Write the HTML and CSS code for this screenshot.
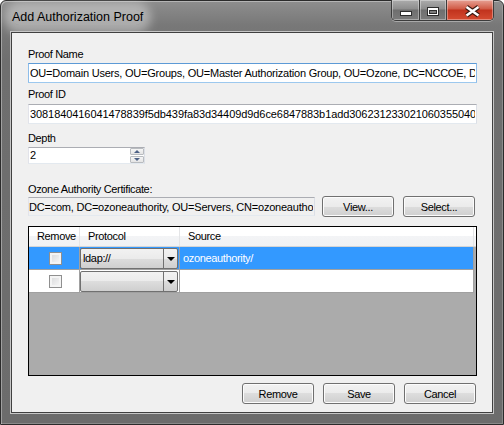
FILE: index.html
```html
<!DOCTYPE html>
<html lang="en">

<head>
    <meta charset="UTF-8">
    <meta name="viewport" content="width=device-width, initial-scale=1.0">
    <title>Add Authorization Proof</title>
    <link rel="stylesheet" href="styles.css">
</head>

<body>
    <div class="window">
        <!-- Title bar with caption buttons -->
        <div class="titlebar">
            <span class="title">Add Authorization Proof</span>
            <div class="caption-buttons">
                <button class="cap cap-min" title="Minimize">
                    <svg width="27" height="21" viewBox="0 0 27 21">
                        <rect x="8.5" y="11.5" width="11" height="4" fill="#fff" stroke="#2d2d2d" />
                    </svg>
                </button>
                <button class="cap cap-max" title="Maximize">
                    <svg width="26" height="21" viewBox="0 0 26 21">
                        <rect x="7.5" y="7.5" width="11" height="8" fill="#fff" stroke="#2d2d2d" />
                        <rect x="9.5" y="10.5" width="7" height="3" fill="#7c7c7c" stroke="#2d2d2d" />
                    </svg>
                </button>
                <button class="cap cap-close" title="Close">
                    <svg width="46" height="21" viewBox="0 0 46 21">
                        <path d="M19.5 7 L31.5 15.5 M31.5 7 L19.5 15.5" stroke="#3b1a12" stroke-width="4.6" />
                        <path d="M19.5 7 L31.5 15.5 M31.5 7 L19.5 15.5" stroke="#fff" stroke-width="2.4" />
                    </svg>
                </button>
            </div>
        </div>

        <div class="client">
            <label class="field-label">Proof Name</label>
            <input class="textbox focused" type="text"
                value="OU=Domain Users, OU=Groups, OU=Master Authorization Group, OU=Ozone, DC=NCCOE, DC=local">

            <label class="field-label label-id">Proof ID</label>
            <input class="textbox textbox-id" type="text"
                value="3081840416041478839f5db439fa83d34409d9d6ce6847883b1add30623123302106035504031312">

            <label class="field-label label-depth">Depth</label>
            <div class="spinner">
                <input class="spinner-value" type="text" value="2">
                <div class="spinner-buttons">
                    <span class="spin-btn spin-up"></span>
                    <span class="spin-btn spin-down"></span>
                </div>
            </div>

            <label class="field-label label-cert">Ozone Authority Certificate:</label>
            <div class="cert-row">
                <input class="textbox cert-box" type="text" readonly
                    value="DC=com, DC=ozoneauthority, OU=Servers, CN=ozoneauthority">
                <button class="btn btn-view">View...</button>
                <button class="btn btn-select">Select...</button>
            </div>

            <!-- Sources grid -->
            <div class="grid">
                <div class="grid-header">
                    <div class="hcell col-remove">Remove</div>
                    <div class="hcell col-protocol">Protocol</div>
                    <div class="hcell col-source">Source</div>
                </div>
                <div class="grid-row selected">
                    <div class="cell col-remove cell-check"><span class="checkbox"></span></div>
                    <div class="cell col-protocol cell-combo">
                        <div class="combo">
                            <span class="combo-text">ldap://</span>
                            <span class="combo-arrow"></span>
                        </div>
                    </div>
                    <div class="cell col-source cell-text">ozoneauthority/</div>
                </div>
                <div class="grid-row">
                    <div class="cell col-remove cell-check"><span class="checkbox"></span></div>
                    <div class="cell col-protocol cell-combo">
                        <div class="combo">
                            <span class="combo-text"></span>
                            <span class="combo-arrow"></span>
                        </div>
                    </div>
                    <div class="cell col-source cell-text"></div>
                </div>
            </div>

            <div class="actions">
                <button class="btn">Remove</button>
                <button class="btn">Save</button>
                <button class="btn">Cancel</button>
            </div>
        </div>
    </div>
</body>

</html>
```

FILE: styles.css
```css
* {
    box-sizing: border-box;
}

body {
    margin: 0;
    background: #fff;
    font-family: "Liberation Sans", Arial, sans-serif;
    font-size: 11px;
    letter-spacing: -0.35px;
    color: #000;
}

/* Window frame */
.window {
    width: 504px;
    height: 425px;
    display: flex;
    flex-direction: column;
    padding: 0 10px 11px;
    border: 1px solid #2b2b2b;
    border-radius: 6px 6px 0 0;
    background: linear-gradient(to bottom, #8e8e8e 0, #787878 24px, #6f6f6f 60px, #6c6c6c 100%);
    box-shadow: inset 1px 1px 0 rgba(255, 255, 255, 0.35), inset -1px -1px 0 rgba(255, 255, 255, 0.2);
}

.titlebar {
    height: 31px;
    display: flex;
    justify-content: space-between;
    align-items: flex-start;
}

.title {
    margin-top: 9px;
    margin-left: 1px;
    font-size: 12.5px;
    line-height: 15px;
    letter-spacing: 0;
    background: rgba(255, 255, 255, 0.38);
    border-radius: 8px;
    box-shadow: 0 0 10px 8px rgba(255, 255, 255, 0.38);
}

.caption-buttons {
    display: flex;
    height: 21px;
    margin-top: -1px;
    margin-right: -1px;
    border: 1px solid #3c3c3c;
    border-top: none;
    border-radius: 0 0 5px 5px;
    overflow: hidden;
    box-shadow: 0 1px 0 rgba(255, 255, 255, 0.35);
}

.cap {
    display: block;
    width: 27px;
    height: 100%;
    padding: 0;
    border: none;
    background: linear-gradient(#acacac, #8d8d8d 45%, #6e6e6e 50%, #7b7b7b 100%);
    box-shadow: inset 0 0 0 1px rgba(255, 255, 255, 0.35);
}

.cap svg {
    display: block;
}

.cap + .cap {
    border-left: 1px solid #3c3c3c;
}

.cap-close {
    width: 47px;
    background: linear-gradient(#e7a194, #d05a45 45%, #c1321d 50%, #d54b31 100%);
}

/* Client area */
.client {
    flex: 1;
    display: flex;
    flex-direction: column;
    padding: 15px 15px 0 16px;
    background: #f0f0f0;
    border: 1px solid #404040;
    box-shadow: 0 0 0 1px #c6c6c6;
}

.field-label {
    display: block;
    line-height: 13px;
}

.label-id {
    margin-top: 5px;
}

.label-depth {
    margin-top: 8px;
}

.label-cert {
    margin-top: 19px;
}

.textbox {
    display: block;
    width: 100%;
    height: 20px;
    margin: 2px 0 0;
    padding: 0 1px;
    border: 1px solid;
    border-color: #abadb3 #dbdfe6 #e3e9ef #e2e3ea;
    background: #fff;
    font: inherit;
    letter-spacing: -0.22px;
    color: #000;
    outline: none;
}

.textbox.focused {
    border-color: #5c9ad6 #8dbdea #9cc8ee #8dbdea;
}

.textbox-id {
    margin-top: 3px;
    letter-spacing: -0.08px;
}

/* Numeric up/down */
.spinner {
    display: flex;
    width: 117px;
    height: 17px;
    margin-top: 2px;
    border: 1px solid;
    border-color: #abadb3 #dbdfe6 #e3e9ef #e2e3ea;
    background: #fff;
}

.spinner-value {
    flex: 1;
    min-width: 0;
    height: 15px;
    padding: 0 1px;
    border: none;
    background: transparent;
    font: inherit;
    letter-spacing: inherit;
    line-height: 15px;
    outline: none;
}

.spinner-buttons {
    width: 14px;
    display: flex;
    flex-direction: column;
    gap: 1px;
}

.spin-btn {
    flex: 1;
    display: flex;
    align-items: center;
    justify-content: center;
    border: 1px solid #b9bcc0;
    border-radius: 1px;
    background: linear-gradient(#f6f6f6, #e4e4e4);
}

.spin-up::after,
.spin-down::after {
    content: "";
    border-left: 3px solid transparent;
    border-right: 3px solid transparent;
}

.spin-up::after {
    border-bottom: 3px solid #4d6185;
}

.spin-down::after {
    border-top: 3px solid #4d6185;
}

/* Certificate row */
.cert-row {
    display: flex;
    align-items: flex-start;
    height: 21px;
}

.cert-box {
    width: 287px;
    height: 19px;
    margin-top: 1px;
    padding-left: 0;
    background: #f0f0f0;
}

.btn {
    width: 72px;
    height: 21px;
    padding: 0;
    border: 1px solid #707070;
    border-radius: 3px;
    background: linear-gradient(#f2f2f2 0, #ebebeb 50%, #dddddd 50%, #cfcfcf 100%);
    box-shadow: inset 0 0 0 1px #fcfcfc;
    font: inherit;
    letter-spacing: inherit;
    color: #000;
}

.btn-view {
    margin-left: 7px;
}

.btn-select {
    margin-left: 9px;
}

/* Sources grid */
.grid {
    height: 150px;
    margin-top: 9px;
    border: 1px solid #000;
    background: #ababab;
}

.grid-header {
    display: flex;
    height: 20px;
    background: linear-gradient(#fff 0, #fff 45%, #f3f4f6 45%, #f1f2f4 100%);
    border-bottom: 1px solid #d5d5d5;
}

.hcell {
    padding-left: 8px;
    line-height: 19px;
    border-right: 1px solid #e4e5e7;
}

.col-remove {
    width: 51px;
}

.col-protocol {
    width: 100px;
}

.col-source {
    width: 294px;
}

.grid-row {
    display: flex;
    width: 445px;
    height: 23px;
    background: #fff;
    border-bottom: 1px solid #a0a0a0;
}

.grid-row.selected {
    background: #3399ff;
    color: #fff;
}

.cell {
    border-right: 1px solid #a0a0a0;
}

.cell-check {
    display: flex;
    align-items: center;
    justify-content: center;
    padding-left: 3px;
}

.checkbox {
    width: 13px;
    height: 13px;
    border: 1px solid #8f8f8f;
    background: linear-gradient(135deg, #d6d7d9, #fafafa);
    box-shadow: inset 0 0 0 2px #f4f4f4;
}

.cell-combo {
    padding: 1px 1px 0 0;
}

.combo {
    display: flex;
    height: 21px;
    border: 1px solid #707070;
    border-radius: 2px;
    background: linear-gradient(#f2f2f2, #ebebeb 50%, #dddddd 50%, #cfcfcf);
    color: #000;
}

.combo-text {
    flex: 1;
    padding-left: 2px;
    line-height: 19px;
}

.combo-arrow {
    width: 14px;
    display: flex;
    align-items: center;
    justify-content: center;
    border-left: 1px solid #707070;
}

.combo-arrow::after {
    content: "";
    border-left: 4px solid transparent;
    border-right: 4px solid transparent;
    border-top: 4px solid #000;
}

.cell-text {
    padding-left: 3px;
    line-height: 22px;
    white-space: nowrap;
}

/* Dialog buttons */
.actions {
    display: flex;
    justify-content: flex-end;
    gap: 9px;
    margin-top: 7px;
    padding-right: 1px;
}
```
